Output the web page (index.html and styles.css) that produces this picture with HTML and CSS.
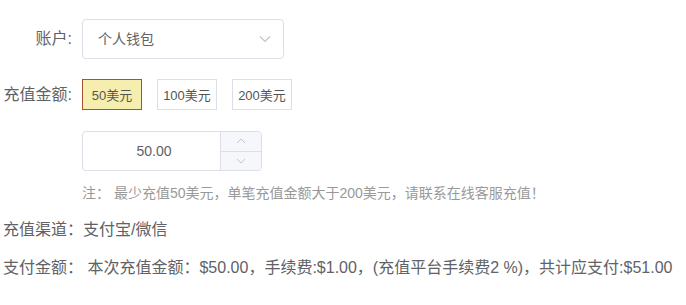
FILE: index.html
```html
<!DOCTYPE html>
<html lang="zh-CN">
<head>
<meta charset="utf-8">
<title>充值</title>
<link rel="stylesheet" href="styles.css">
</head>
<body>
<div class="form">
  <div class="row row-account">
    <label class="lbl">账户:</label>
    <div class="select">
      <span class="select-text">个人钱包</span>
      <svg class="chev" width="12" height="8" viewBox="0 0 12 8"><path d="M1 1.5 L6 6.5 L11 1.5" fill="none" stroke="#c0c4cc" stroke-width="1.1"/></svg>
    </div>
  </div>
  <div class="row row-amount">
    <label class="lbl">充值金额:</label>
    <div class="opts">
      <span class="opt active">50美元</span>
      <span class="opt">100美元</span>
      <span class="opt">200美元</span>
    </div>
  </div>
  <div class="row row-num">
    <div class="numinput">
      <span class="val">50.00</span>
      <div class="ctrl">
        <span class="step up"><svg width="10" height="6" viewBox="0 0 10 6"><path d="M1 5 L5 1 L9 5" fill="none" stroke="#c0c4cc" stroke-width="1"/></svg></span>
        <span class="step down"><svg width="10" height="6" viewBox="0 0 10 6"><path d="M1 1 L5 5 L9 1" fill="none" stroke="#c0c4cc" stroke-width="1"/></svg></span>
      </div>
    </div>
  </div>
  <p class="note">注：&nbsp;最少充值50美元，单笔充值金额大于200美元，请联系在线客服充值！</p>
  <p class="line line-channel">充值渠道：支付宝/微信</p>
  <p class="line line-pay">支付金额：&nbsp;本次充值金额：$50.00，手续费:$1.00，(充值平台手续费2 %)，共计应支付:$51.00</p>
</div>
</body>
</html>
```

FILE: styles.css
```css
html, body {
  margin: 0;
  padding: 0;
  background: #ffffff;
}
body {
  font-family: "Liberation Sans", "Noto Sans CJK SC", sans-serif;
  color: #606266;
  font-size: 16px;
}
.form {
  padding-top: 19px;
}
.row {
  display: flex;
  align-items: center;
}
.lbl {
  width: 72px;
  flex: none;
  text-align: right;
  font-size: 16px;
  line-height: 20px;
  color: #606266;
}
.select {
  margin-left: 10px;
  width: 202px;
  height: 40px;
  box-sizing: border-box;
  border: 1px solid #dcdfe6;
  border-radius: 4px;
  display: flex;
  align-items: center;
  justify-content: space-between;
  padding: 0 12px 0 15px;
}
.select-text {
  font-size: 14px;
  line-height: 20px;
  color: #606266;
}
.chev {
  display: block;
}
.row-amount {
  margin-top: 20px;
}
.opts {
  margin-left: 10px;
  display: flex;
  gap: 15px;
}
.opt {
  width: 60px;
  height: 31px;
  box-sizing: border-box;
  border: 1px solid #dcdfe6;
  background: #ffffff;
  display: flex;
  align-items: center;
  justify-content: center;
  font-size: 13px;
  color: #555555;
}
.opt.active {
  background: #f6eeae;
  border-color: #a9532f;
}
.row-num {
  margin-top: 21px;
  padding-left: 82px;
}
.numinput {
  width: 180px;
  height: 40px;
  box-sizing: border-box;
  border: 1px solid #dcdfe6;
  border-radius: 4px;
  display: flex;
  overflow: hidden;
}
.val {
  flex: 1;
  display: flex;
  align-items: center;
  justify-content: center;
  padding-left: 15px;
  padding-right: 10px;
  font-size: 14px;
  color: #606266;
}
.ctrl {
  width: 40px;
  flex: none;
  display: flex;
  flex-direction: column;
  border-left: 1px solid #dcdfe6;
  background: #f5f7fa;
}
.step {
  flex: 1;
  display: flex;
  align-items: center;
  justify-content: center;
}
.step svg {
  display: block;
}
.step.up {
  border-bottom: 1px solid #dcdfe6;
}
.note {
  margin: 12px 0 0 82px;
  font-size: 14px;
  line-height: 20px;
  color: #999999;
}
.line {
  margin: 0;
  margin-left: 3px;
  font-size: 16px;
  line-height: 20px;
  color: #606266;
}
.line-channel {
  margin-top: 17px;
}
.line-pay {
  margin-top: 18px;
}
```
